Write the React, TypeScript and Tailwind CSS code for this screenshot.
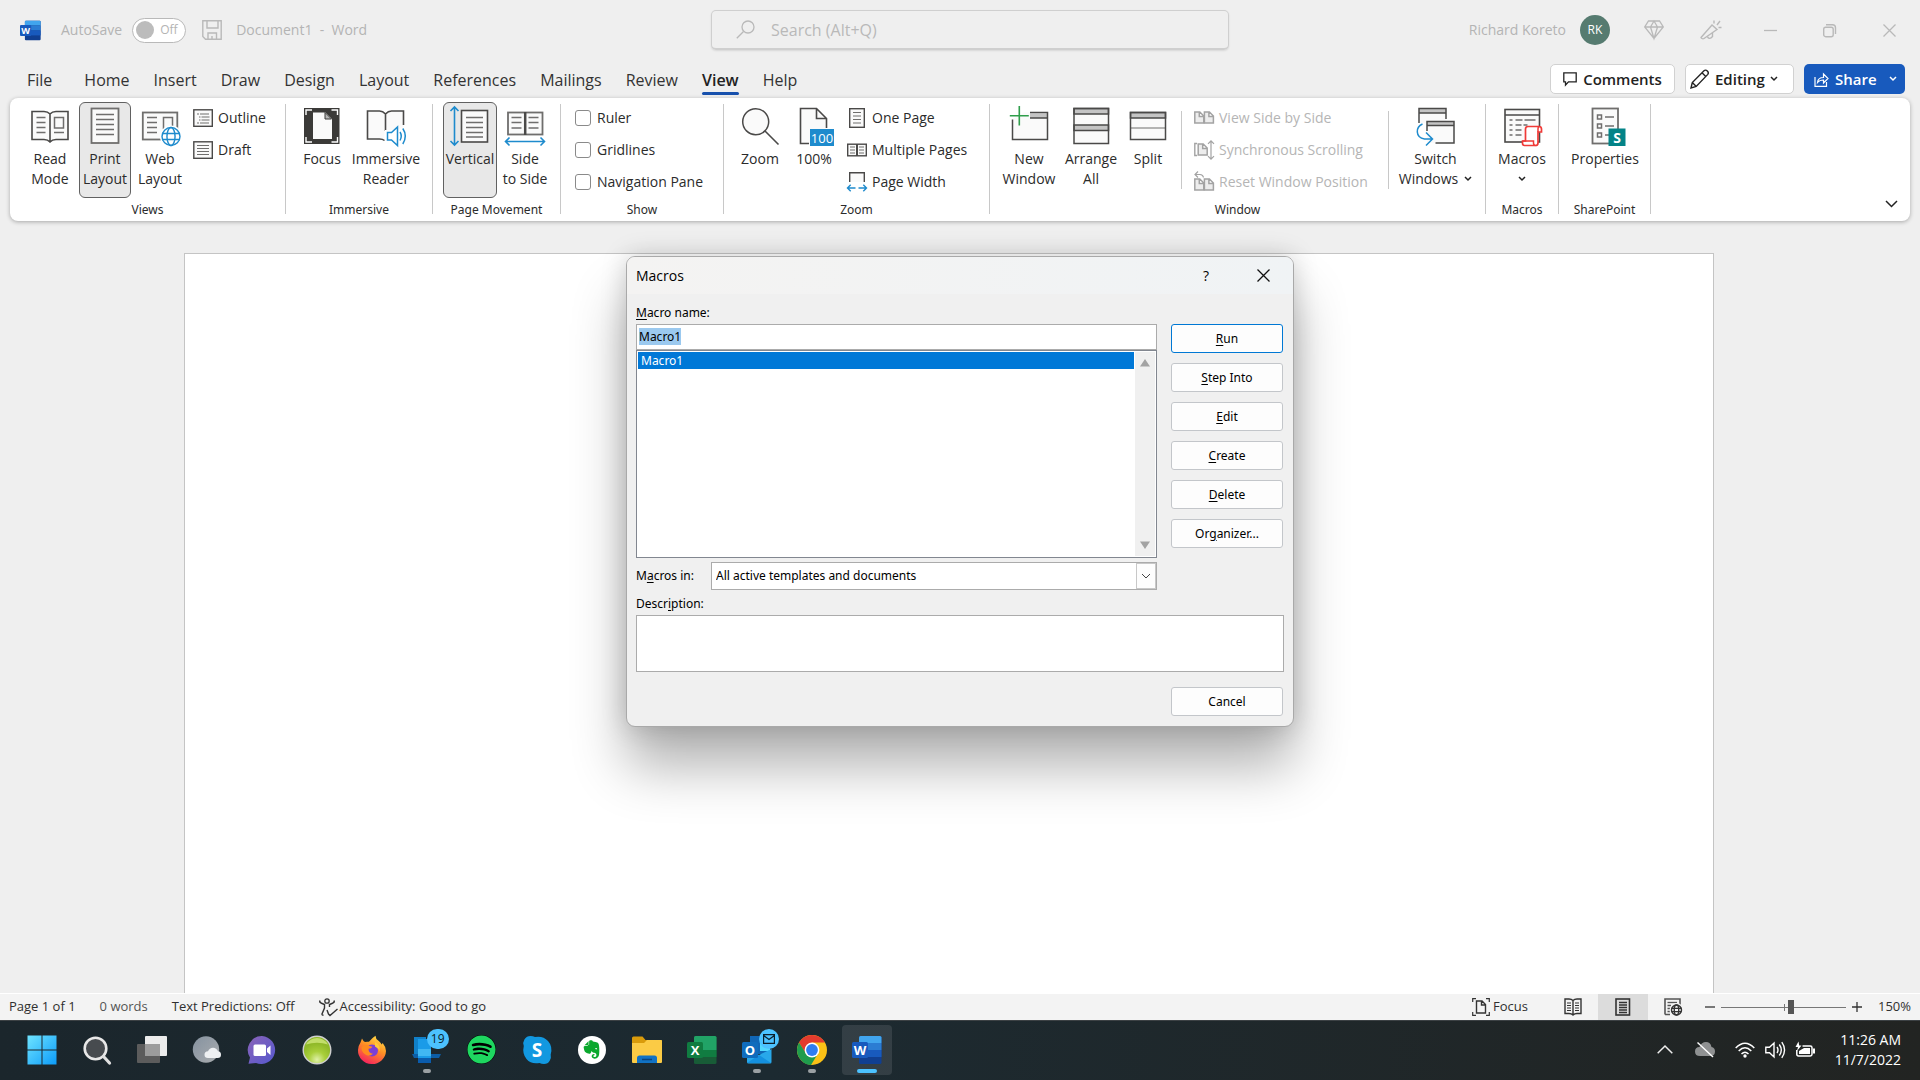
import { useEffect, useRef, type ReactNode } from "react";
import { FaEvernote, FaSpotify } from "react-icons/fa";

// ---------- icon helpers ----------

const INK = "#4a4948";
const LINE = "#6f6e6d";
const PAPER = "#fafafa";
const BLUE = "#1e8bcd";

function Svg({ w = 40, h = w, children }: { w?: number; h?: number; children: ReactNode }) {
  return (
    <svg width={w} height={h} viewBox={`0 0 ${w} ${h}`} fill="none" className="shrink-0 overflow-visible" aria-hidden="true">
      {children}
    </svg>
  );
}

function Lines({ x1, x2, ys, color = LINE, w = 1.5 }: { x1: number; x2: number; ys: number[]; color?: string; w?: number }) {
  return <path d={ys.map((y) => `M${x1} ${y}H${x2}`).join("")} stroke={color} strokeWidth={w} />;
}

function Chevron({ size = 8, color = "#222222", w = 1.5 }: { size?: number; color?: string; w?: number }) {
  return (
    <svg width={size} height={size / 2 + 2} viewBox={`0 0 ${size} ${size / 2 + 2}`} fill="none" className="inline-block shrink-0" aria-hidden="true">
      <path d={`M1 1l${size / 2 - 1} ${size / 2 - 1} ${size / 2 - 1}-${size / 2 - 1}`} stroke={color} strokeWidth={w} />
    </svg>
  );
}

// ---------- large ribbon icons (40 x 40) ----------

const ReadModeIcon = () => (
  <Svg>
    <path d="M20 8c-1.5-1.700-3.500-2.500-6-2.500H2v28h12c2.500 0 4.500.8 6 2.500 1.500-1.700 3.500-2.500 6-2.500h12v-28H26c-2.500 0-4.500.8-6 2.500zV36" fill={PAPER} stroke={INK} strokeWidth="1.6" />
    <Lines x1={6.5} x2={15.5} ys={[11.5, 16.5, 21.5, 26.5]} />
    <rect x="24.5" y="11.5" width="9" height="10.500" stroke={LINE} strokeWidth="1.5" />
    <Lines x1={24} x2={34} ys={[26.5]} />
  </Svg>
);

const PrintLayoutIcon = () => (
  <Svg>
    <rect x="6.5" y="2.5" width="27" height="34.5" fill={PAPER} stroke={LINE} strokeWidth="1.8" />
    <Lines x1={11} x2={29} ys={[8.5, 13.5, 18.5, 23.5, 28.5]} />
  </Svg>
);

function Globe({ cx, cy, r, color = BLUE, bg = "#ffffff" }: { cx: number; cy: number; r: number; color?: string; bg?: string }) {
  return (
    <g stroke={color} strokeWidth="1.4">
      <circle cx={cx} cy={cy} r={r + 2} fill={bg} stroke="none" />
      <circle cx={cx} cy={cy} r={r} fill={bg} />
      <ellipse cx={cx} cy={cy} rx={r * 0.45} ry={r} />
      <path d={`M${cx - r} ${cy - r / 3}h${2 * r}M${cx - r} ${cy + r / 3}h${2 * r}`} />
    </g>
  );
}

const WebLayoutIcon = () => (
  <Svg>
    <rect x="2.8" y="6.5" width="34.5" height="27" fill={PAPER} stroke={LINE} strokeWidth="1.8" />
    <Lines x1={7} x2={17} ys={[11.5, 16.5, 21.5, 26.5]} />
    <rect x="23.5" y="11.5" width="9" height="11" stroke={LINE} strokeWidth="1.5" />
    <Globe cx={31} cy={30.5} r={9} />
  </Svg>
);

const FocusIcon = () => (
  <Svg>
    <rect x="2" y="2" width="35.5" height="36" fill="#3b3a38" />
    <path d="M4 9V4h6M29.500 4h6v5M35.500 31v5h-6M10 36H4v-5" stroke="#fff" strokeWidth="1.4" />
    <path d="M11 6.500h12.500l6.500 6.500v20H11z" fill={PAPER} />
    <path d="M23 6.500V13h6.500z" fill="#b5b5b5" stroke="#3b3a38" />
  </Svg>
);

const ImmersiveIcon = () => (
  <Svg>
    <path d="M19.500 8c-1.500-1.700-3.500-3-6-3H1.500v28h12c2 0 4 .5 5 2V8zM19.500 8c1.500-1.700 3.500-3 6-3h12v28h-18z" fill={PAPER} />
    <path d="M19.500 25V8c-1.500-1.700-3.500-3-6-3H1.500v28h12c2 0 3.800.5 5 1.500M19.500 8c1.500-1.700 3.500-3 6-3h12v14" stroke={INK} strokeWidth="1.6" />
    <path d="M19 24h12l9-4v20H19z" fill="#fff" />
    <path d="M21.500 26.500h4l6-5.500v18.500l-6-5.500h-4zM34 26q2.500 4 0 8.500M36.800 22.500q5 7.500 0 15.500" stroke={BLUE} strokeWidth="1.5" />
  </Svg>
);

const VerticalIcon = () => (
  <Svg>
    <path d="M4.500 1v38M.5 5l4-4 4 4M.5 35l4 4 4-4" stroke={BLUE} strokeWidth="1.6" />
    <rect x="11.5" y="4.5" width="26" height="31.500" fill={PAPER} stroke={INK} strokeWidth="1.6" />
    <Lines x1={16} x2={33} ys={[11.5, 16.5, 21.5, 26.5, 31]} />
  </Svg>
);

const SideIcon = () => (
  <Svg>
    <rect x="3" y="6.5" width="34.5" height="22" fill={PAPER} stroke={LINE} strokeWidth="1.8" />
    <path d="M20.200 6v23" stroke={INK} strokeWidth="2.5" />
    <Lines x1={6.5} x2={16.5} ys={[11.5, 16.5, 22]} />
    <Lines x1={23.5} x2={33.5} ys={[11.5, 16.5, 22]} />
    <path d="M.5 35.500h39M4.500 31.500l-4 4 4 4M35.500 31.500l4 4-4 4" stroke={BLUE} strokeWidth="1.6" />
  </Svg>
);

const ZoomIcon = () => (
  <Svg>
    <circle cx="15.7" cy="15.7" r="13" fill={PAPER} stroke={INK} strokeWidth="1.5" />
    <path d="M25 25l13.500 13.500" stroke={INK} strokeWidth="1.6" />
  </Svg>
);

const HundredIcon = () => (
  <Svg>
    <path d="M6.500 37.500v-35h16l10 10v25z" fill={PAPER} />
    <path d="M15 37.500H6.500v-35h16l10 10V22M22.500 2.500v10h10" stroke={INK} strokeWidth="1.6" />
    <rect x="16" y="23" width="24" height="17" fill={BLUE} />
    <text x="28" y="36.5" textAnchor="middle" fill="#fff" fontSize="13" fontFamily="Open Sans, sans-serif">100</text>
  </Svg>
);

const NewWindowIcon = () => (
  <Svg>
    <path d="M3.500 13v20.500h35v-27H15" fill={PAPER} />
    <path d="M21 7.500h17.500V12H21z" fill="#c4c4c4" />
    <path d="M3.500 13.500v20h35v-27H21M21 12h17.500" stroke={INK} strokeWidth="1.5" />
    <path d="M10.300 0v19.500M.8 9.700h19" stroke="#2f9e4b" strokeWidth="1.6" />
  </Svg>
);

const ArrangeIcon = () => (
  <Svg>
    <rect x="3" y="2.5" width="34.5" height="35" fill={PAPER} />
    <path d="M3 2.500h34.500V8H3zM3 19h34.500v5.500H3z" fill="#c4c4c4" stroke={INK} strokeWidth="1.5" />
    <rect x="3" y="2.5" width="34.5" height="35" stroke={INK} strokeWidth="1.5" />
  </Svg>
);

const SplitIcon = () => (
  <Svg>
    <rect x="2.5" y="6.5" width="35" height="27" fill={PAPER} />
    <path d="M2.500 6.500h35V12h-35z" fill="#c4c4c4" stroke={INK} strokeWidth="1.5" />
    <path d="M2.500 22h35" stroke={LINE} strokeWidth="1.2" />
    <rect x="2.5" y="6.5" width="35" height="27" stroke={INK} strokeWidth="1.5" />
  </Svg>
);

const SwitchIcon = () => (
  <Svg>
    <path d="M3 17V2.500h27V17z" fill={PAPER} />
    <path d="M3 2.500h27V7H3z" fill="#c4c4c4" />
    <path d="M3 17V2.500h27V13M3 7h27" stroke={INK} strokeWidth="1.5" />
    <rect x="11" y="15.5" width="27" height="21.5" fill={PAPER} />
    <path d="M11 15.500h27v4H11z" fill="#c4c4c4" />
    <path d="M11 25v-9.500h27V37H19.500M11 19.500h27" stroke={INK} strokeWidth="1.5" />
    <path d="M6.500 18C-.5 21-1 31.500 8.500 33H16M10 26.500l6.500 6.500-6.500 6.500" stroke={BLUE} strokeWidth="1.5" />
  </Svg>
);

const MacrosIcon = () => (
  <Svg>
    <rect x="3" y="3.5" width="34.5" height="32.500" fill={PAPER} stroke={INK} strokeWidth="1.6" />
    <path d="M3 9h34.500" stroke={INK} strokeWidth="1.5" />
    <path d="M7.500 14h3m3 0h7m2 0h11M7.500 19h3m3 0h6m2 0h4M7.500 24h3m3 0h6M7.500 29h3m3 0h6" stroke={LINE} strokeWidth="1.5" />
    <path d="M23.500 35V23q0-2.500 2.500-2.500h11q2.500 0 2.500 2.500v3H36v11q0 2.500-2.500 2.500h-11q-2 0-2-2.200V35z" fill="#fff" stroke="#f03a37" strokeWidth="1.7" />
    <path d="M36 26v-3q0-2.500 1.500-2.500M20.500 35h11v2q0 2.500 2 2.500" stroke="#f03a37" strokeWidth="1.5" />
  </Svg>
);

const PropertiesIcon = () => (
  <Svg>
    <rect x="7.5" y="2.5" width="25.5" height="35" fill={PAPER} stroke={LINE} strokeWidth="1.8" />
    <path d="M12.500 9h4v4h-4zM12.500 18h4v4h-4zM12.500 27h4v4h-4zM20 11h9M20 20h9M20 29h4" stroke={LINE} strokeWidth="1.5" />
    <rect x="23.5" y="22.5" width="17" height="17.5" fill="#038387" />
    <text x="32" y="36.5" textAnchor="middle" fill="#fff" fontSize="14" fontWeight="700" fontFamily="Open Sans, sans-serif">S</text>
  </Svg>
);

// ---------- small ribbon icons (20 x 20) ----------

const OutlineIcon = () => (
  <Svg w={20}>
    <rect x="0.8" y="1.8" width="18.5" height="16.5" fill={PAPER} stroke={INK} strokeWidth="1.4" />
    <path d="M4 6h2m1 0h9M6 9h1.500m1 0h8M6 12h1.500m1 0h8M4 15h2m1 0h9" stroke={LINE} strokeWidth="1.2" />
  </Svg>
);

const DraftIcon = () => (
  <Svg w={20}>
    <rect x="0.8" y="1.8" width="18.5" height="16.5" fill={PAPER} stroke={INK} strokeWidth="1.4" />
    <Lines x1={4} x2={16} ys={[5.5, 8.5, 11.5, 14.5]} w={1.2} />
  </Svg>
);

const OnePageIcon = () => (
  <Svg w={20}>
    <rect x="2.7" y="0.7" width="14.6" height="18.6" fill={PAPER} stroke={INK} strokeWidth="1.4" />
    <Lines x1={6} x2={14} ys={[4.5, 8, 11.5, 15]} w={1.2} />
  </Svg>
);

const MultiPageIcon = () => (
  <Svg w={20}>
    <rect x="0.7" y="4.2" width="18.6" height="11.6" fill={PAPER} stroke={INK} strokeWidth="1.4" />
    <path d="M10 4v12" stroke={INK} strokeWidth="2" />
    <Lines x1={3} x2={8} ys={[7, 10, 13]} w={1.2} />
    <Lines x1={12} x2={17} ys={[7, 10, 13]} w={1.2} />
  </Svg>
);

const PageWidthIcon = () => (
  <Svg w={20}>
    <path d="M2.700 10V.8h14.600V10" fill={PAPER} stroke={INK} strokeWidth="1.4" />
    <path d="M.5 16h8M11.500 16h8M3.700 12.800L.5 16l3.200 3.200M16.300 12.800l3.200 3.200-3.200 3.200" stroke={BLUE} strokeWidth="1.4" />
  </Svg>
);

const PageGlyph = ({ x, y }: { x: number; y: number }) => (
  <path d={`M${x} ${y}h5l4 4v7h-9zM${x + 4.5} ${y}v4.500h4.500`} fill="#ededed" stroke="#a3a3a3" strokeWidth="1.5" />
);

const SideBySideIcon = () => (
  <Svg w={20}>
    <PageGlyph x={0.8} y={4} />
    <PageGlyph x={10.4} y={4} />
  </Svg>
);

const SyncScrollIcon = () => (
  <Svg w={20}>
    <path d="M3 3.500H.8v12H3" stroke="#a3a3a3" strokeWidth="1.4" />
    <PageGlyph x={4.2} y={4} />
    <path d="M17 .8v18.400M14 3.800l3-3 3 3M14 16.200l3 3 3-3" stroke="#a3a3a3" strokeWidth="1.2" />
  </Svg>
);

const ResetPosIcon = () => (
  <Svg w={20}>
    <path d="M4-.5l-3 3 3 3M1 2.500h5q3 0 3.500 3" stroke="#a3a3a3" strokeWidth="1.2" />
    <PageGlyph x={0.8} y={7} />
    <PageGlyph x={10.4} y={7} />
  </Svg>
);

// ---------- office logos, shared by title bar and taskbar ----------

function OfficeLogo({ size, letter, bands, plate }: { size: number; letter: string; bands: string[]; plate: string }) {
  return (
    <svg width={size} height={size} viewBox="0 0 30 30" aria-hidden="true">
      <rect x="7" y="1" width="22.5" height="28" rx="1.5" fill={bands[3]} />
      <path d="M7 8V2.500Q7 1 8.500 1H28q1.500 0 1.500 1.500V8z" fill={bands[0]} />
      <path d="M7 8h22.500v7H7z" fill={bands[1]} />
      <path d="M7 15h22.500v7H7z" fill={bands[2]} />
      <rect x="0" y="7" width="16" height="16" rx="1.5" fill={plate} />
      <text x="8" y="19.5" textAnchor="middle" fill="#fff" fontSize="13" fontWeight="700" fontFamily="Open Sans, sans-serif">{letter}</text>
    </svg>
  );
}

const WORD_BANDS = ["#41a5ee", "#2b7cd3", "#185abd", "#103f91"];
const EXCEL_BANDS = ["#21a366", "#21a366", "#107c41", "#185c37"];

// ---------- title bar ----------

function TitleBar() {
  return (
    <header className="grid h-[60px] grid-cols-[1fr_518px_1fr] items-center pl-5 text-sm text-[#b4b4b4]">
      <div className="flex items-center">
        <OfficeLogo size={21} letter="W" bands={WORD_BANDS} plate="#185abd" />
        <label htmlFor="autosave" className="ml-5">AutoSave</label>
        <button id="autosave" type="button" role="switch" aria-checked="false" className="ml-2.5 flex h-[25px] w-[54px] items-center gap-1.5 rounded-full border border-[#b9b9b9] bg-white px-[3px] text-xs">
          <span className="h-[18px] w-[18px] rounded-full bg-[#bcbcbc]" />
          Off
        </button>
        <button type="button" aria-label="Save" className="ml-4">
          <Svg w={20}>
            <path d="M.8.8h18.400v18.400H3.500L.8 16.500zM5 1v7h11V1M6 19v-6h8.500v6M10 19v-3" stroke="#b9b9b9" strokeWidth="1.4" />
          </Svg>
        </button>
        <span className="ml-3.5 whitespace-pre">Document1  -  Word</span>
      </div>
      <label className="flex h-10 items-center rounded-[5px] border border-b-2 border-[#cfcfcf] pl-6 shadow-[0_1px_2px_rgba(0,0,0,0.1)]">
        <Svg w={19}>
          <circle cx="12" cy="7" r="6" stroke="#b9b9b9" strokeWidth="1.3" />
          <path d="M7.500 11.500L.8 18.200" stroke="#b9b9b9" strokeWidth="1.3" />
        </Svg>
        <input type="search" aria-label="Search" placeholder="Search (Alt+Q)" className="ml-4 flex-1 bg-transparent text-base outline-none placeholder:text-[#b9b9b9]" />
      </label>
      <div className="flex items-center justify-end pr-6">
        <span>Richard Koreto</span>
        <span className="mr-[34px] ml-3.5 flex h-[30px] w-[30px] items-center justify-center rounded-full bg-[#567b70] text-xs text-white">RK</span>
        <button type="button" aria-label="Premium" className="mr-9">
          <Svg w={20}>
            <path d="M4.500 1h11L19.300 7 10 18.500.7 7zM.7 7h18.600M6.500 7L10 18.500 13.500 7 10 1 6.500 7" stroke="#b9b9b9" strokeWidth="1.3" />
          </Svg>
        </button>
        <button type="button" aria-label="What's new" className="mr-[42px]">
          <Svg w={22} h={20}>
            <path d="M1 17.500L12 5l5 4.500-13 9q-1 .7-2 0t-1-1zM7.500 17q2 3 5-.5V13M14 3.500v-3M17 5l3-4M18.500 7.500h3" stroke="#b9b9b9" strokeWidth="1.4" />
          </Svg>
        </button>
        <button type="button" aria-label="Minimize" className="mr-[46px]">
          <Svg w={13}><path d="M0 6.500h13" stroke="#b9b9b9" strokeWidth="1.3" /></Svg>
        </button>
        <button type="button" aria-label="Restore" className="mr-[47px]">
          <Svg w={13}>
            <rect x="0.7" y="3.2" width="9.5" height="9.5" rx="2" stroke="#b9b9b9" strokeWidth="1.4" />
            <path d="M3 .8h6.500q3 0 3 3V10" stroke="#b9b9b9" strokeWidth="1.4" />
          </Svg>
        </button>
        <button type="button" aria-label="Close">
          <Svg w={13}><path d="M.5.5l12 12M12.500.5l-12 12" stroke="#b9b9b9" strokeWidth="1.3" /></Svg>
        </button>
      </div>
    </header>
  );
}

// ---------- tabs ----------

const TABS = ["Home", "Insert", "Draw", "Design", "Layout", "References", "Mailings", "Review", "View", "Help"];

function TabRow() {
  return (
    <div className="flex h-[38px] items-center pr-[15px] pl-[27px] text-[#333333]">
      <nav className="flex h-full items-center gap-6 pt-0.5 text-base">
        <button type="button" className="mr-2">File</button>
        {TABS.map((tab) => (
          <button
            key={tab}
            type="button"
            className={tab === "View" ? "relative font-semibold text-[#222222] after:absolute after:inset-x-0 after:-bottom-[3px] after:h-[3px] after:rounded-full after:bg-[#1851ad]" : ""}
          >
            {tab}
          </button>
        ))}
      </nav>
      <div className="ml-auto flex items-center gap-2.5 text-[15px] font-semibold text-[#222222]">
        <button type="button" className="flex h-[30px] w-[125px] items-center justify-center gap-1.5 rounded-[5px] border border-[#d1d1d1] bg-white">
          <Svg w={14}><path d="M.8.8h12.400v9H5.500L2.500 13V9.800H.8z" stroke="#222" strokeWidth="1.3" /></Svg>
          Comments
        </button>
        <button type="button" className="flex h-[30px] w-[109px] items-center gap-[5px] rounded-[5px] border border-[#d1d1d1] bg-white pl-1">
          <Svg w={20}><path d="M1 19l1.300-5.500L14 1.800q1.500-1.500 3.300.3t.5 3.300L6.200 17.500zM2.300 13.500l4 4M12 3.800l4 4" stroke="#222" strokeWidth="1.4" /></Svg>
          <span>Editing</span>
          <Chevron />
        </button>
        <button type="button" className="flex h-[30px] w-[101px] items-center gap-1.5 rounded-[5px] bg-[#185abd] pl-2.5 text-white">
          <Svg w={15}>
            <path d="M1 5v9.300h11.500V10M3.500 10.500q.5-5 6-5V2L14 6.500 9.500 11V8q-4 0-6 2.500z" stroke="#fff" strokeWidth="1.2" />
          </Svg>
          <span className="mr-1.5">Share</span>
          <Chevron color="#ffffff" />
        </button>
      </div>
    </div>
  );
}

// ---------- ribbon ----------

function RibbonGroup({ label, width, pad, children }: { label: string; width: string; pad: string; children: ReactNode }) {
  return (
    <section aria-label={label} className={`flex shrink-0 ${width}`}>
      <div className="flex min-w-0 flex-1 flex-col pt-1">
        <div className={`flex h-24 items-start ${pad}`}>{children}</div>
        <div className="text-center font-['Noto_Sans',sans-serif] text-xs leading-6 whitespace-nowrap">{label}</div>
      </div>
      <div className="mt-1.5 h-[110px] w-px bg-[#c8c8c8]" />
    </section>
  );
}

function BigButton({ icon, lines, width, active = false, chevron = false }: { icon: ReactNode; lines: string[]; width: string; active?: boolean; chevron?: boolean }) {
  return (
    <button
      type="button"
      aria-pressed={active}
      className={`flex h-24 shrink-0 flex-col items-center rounded-md border pt-[3px] leading-5 whitespace-nowrap ${width} ${active ? "border-[#616161] bg-[#e8e8e8]" : "border-transparent"}`}
    >
      {icon}
      <span className="mt-[3px]">{lines[0]}</span>
      <span className="flex h-5 items-center gap-1.5">
        {lines[1]}
        {chevron && <Chevron />}
      </span>
    </button>
  );
}

function SmallButton({ icon, label, disabled = false }: { icon: ReactNode; label: string; disabled?: boolean }) {
  return (
    <button type="button" disabled={disabled} className="flex h-8 items-center gap-[5px] whitespace-nowrap disabled:text-[#b5b5b5]">
      {icon}
      {label}
    </button>
  );
}

function Ribbon() {
  return (
    <div className="relative z-10 mx-2.5 flex h-[123px] rounded-lg bg-white text-sm text-[#2b2b2b] shadow-[0_1px_4px_rgba(0,0,0,0.3)]">
      <RibbonGroup label="Views" width="w-[276px]" pad="pl-3.5 gap-[3px]">
        <BigButton icon={<ReadModeIcon />} lines={["Read", "Mode"]} width="w-[52px]" />
        <BigButton icon={<PrintLayoutIcon />} lines={["Print", "Layout"]} width="w-[52px]" active />
        <BigButton icon={<WebLayoutIcon />} lines={["Web", "Layout"]} width="w-[52px]" />
        <div className="ml-1">
          <SmallButton icon={<OutlineIcon />} label="Outline" />
          <SmallButton icon={<DraftIcon />} label="Draft" />
        </div>
      </RibbonGroup>
      <RibbonGroup label="Immersive" width="w-[147px]" pad="pl-2.5">
        <BigButton icon={<FocusIcon />} lines={["Focus"]} width="w-[52px]" />
        <BigButton icon={<ImmersiveIcon />} lines={["Immersive", "Reader"]} width="w-[76px]" />
      </RibbonGroup>
      <RibbonGroup label="Page Movement" width="w-[128px]" pad="pl-2.5">
        <BigButton icon={<VerticalIcon />} lines={["Vertical"]} width="w-[54px]" active />
        <BigButton icon={<SideIcon />} lines={["Side", "to Side"]} width="w-[56px]" />
      </RibbonGroup>
      <RibbonGroup label="Show" width="w-[163px]" pad="pl-3.5">
        <div>
          {["Ruler", "Gridlines", "Navigation Pane"].map((name) => (
            <label key={name} className="flex h-8 items-center gap-1.5 whitespace-nowrap">
              <input type="checkbox" className="h-4 w-4 appearance-none rounded-[3px] border border-[#8a8a8a] bg-white" />
              {name}
            </label>
          ))}
        </div>
      </RibbonGroup>
      <RibbonGroup label="Zoom" width="w-[266px]" pad="pl-2">
        <BigButton icon={<ZoomIcon />} lines={["Zoom"]} width="w-[56px]" />
        <BigButton icon={<HundredIcon />} lines={["100%"]} width="w-[52px]" />
        <div className="ml-[7px]">
          <SmallButton icon={<OnePageIcon />} label="One Page" />
          <SmallButton icon={<MultiPageIcon />} label="Multiple Pages" />
          <SmallButton icon={<PageWidthIcon />} label="Page Width" />
        </div>
      </RibbonGroup>
      <RibbonGroup label="Window" width="w-[496px]" pad="pl-2">
        <BigButton icon={<NewWindowIcon />} lines={["New", "Window"]} width="w-[62px]" />
        <BigButton icon={<ArrangeIcon />} lines={["Arrange", "All"]} width="w-[62px]" />
        <BigButton icon={<SplitIcon />} lines={["Split"]} width="w-[52px]" />
        <div className="mt-[9px] mr-3 ml-[7px] h-[78px] w-px bg-[#c8c8c8]" />
        <div className="w-[194px]">
          <SmallButton icon={<SideBySideIcon />} label="View Side by Side" disabled />
          <SmallButton icon={<SyncScrollIcon />} label="Synchronous Scrolling" disabled />
          <SmallButton icon={<ResetPosIcon />} label="Reset Window Position" disabled />
        </div>
        <div className="mt-[9px] h-[78px] w-px bg-[#c8c8c8]" />
        <BigButton icon={<SwitchIcon />} lines={["Switch", "Windows"]} width="w-[93px]" chevron />
      </RibbonGroup>
      <RibbonGroup label="Macros" width="w-[73px]" pad="pl-1.5">
        <BigButton icon={<MacrosIcon />} lines={["Macros"]} width="w-[60px]" chevron />
      </RibbonGroup>
      <RibbonGroup label="SharePoint" width="w-[92px]" pad="pl-1.5">
        <BigButton icon={<PropertiesIcon />} lines={["Properties"]} width="w-[80px]" />
      </RibbonGroup>
      <button type="button" aria-label="Collapse ribbon" className="mt-auto mr-3 mb-2 ml-auto">
        <Chevron size={13} />
      </button>
    </div>
  );
}

// ---------- macros dialog ----------

// Label text with its access key underlined
function KeyText({ text, at }: { text: string; at: number }) {
  return (
    <>
      {text.slice(0, at)}
      <u className="underline-offset-2">{text[at]}</u>
      {text.slice(at + 1)}
    </>
  );
}

const ACTIONS = [
  { text: "Run", at: 0 },
  { text: "Step Into", at: 0 },
  { text: "Edit", at: 0 },
  { text: "Create", at: 0 },
  { text: "Delete", at: 0 },
  { text: "Organizer...", at: 2 },
];

function MacrosDialog() {
  const nameRef = useRef<HTMLInputElement>(null);

  useEffect(() => {
    nameRef.current?.focus();
    nameRef.current?.select();
  }, []);

  return (
    <div
      role="dialog"
      aria-label="Macros"
      className="absolute top-[35px] left-1/2 z-20 w-[668px] -translate-x-1/2 overflow-hidden rounded-[9px] border border-[#a9a9a9] bg-[#f0f0f0] font-['Noto_Sans',sans-serif] text-xs text-black shadow-[0_40px_54px_rgba(0,0,0,0.3),0_0_26px_rgba(0,0,0,0.18)]"
    >
      <div className="flex h-[37px] items-center bg-linear-to-r from-[#f4f3f2] to-[#f0f3f5] pr-[23px] pl-[9px] font-['Open_Sans',sans-serif] text-sm">
        <span>Macros</span>
        <button type="button" aria-label="Help" className="mr-12 ml-auto">?</button>
        <button type="button" aria-label="Close">
          <Svg w={13}><path d="M.5.5l12 12M12.500.5l-12 12" stroke="#111" strokeWidth="1.3" /></Svg>
        </button>
      </div>
      <div className="px-[9px] pt-[9px] pb-2.5">
        <div className="flex gap-3.5 pr-px">
          <div className="flex-1">
            <label htmlFor="macro-name" className="block h-[21px] leading-5">
              <KeyText text="Macro name:" at={0} />
            </label>
            <input
              id="macro-name"
              ref={nameRef}
              defaultValue="Macro1"
              className="block h-[26px] w-full border border-[#ababab] bg-white px-0.5 pb-0.5 leading-[17px] outline-none selection:bg-[#9bc9ef] selection:text-black"
            />
            <div className="flex h-[208px] border border-[#828790] bg-white p-px">
              <ul role="listbox" aria-label="Macros" className="flex-1">
                <li role="option" aria-selected="true" className="bg-[#0078d7] pl-[3px] leading-[17px] text-white">Macro1</li>
              </ul>
              <div className="ml-px flex w-5 flex-col items-center justify-between bg-[#f0f0f0] py-[7px]">
                <Svg w={10} h={8}><path d="M0 7.500L5 0l5 7.500z" fill="#a3a3a3" /></Svg>
                <Svg w={10} h={8}><path d="M0 .5L5 8l5-7.500z" fill="#a3a3a3" /></Svg>
              </div>
            </div>
            <div className="mt-1 flex items-center">
              <label htmlFor="macros-in" className="w-[75px]">
                <KeyText text="Macros in:" at={1} />
              </label>
              <div className="relative flex-1">
                <select id="macros-in" className="block h-7 w-full appearance-none border border-[#ababab] bg-white pl-1 outline-none">
                  <option>All active templates and documents</option>
                </select>
                <span className="pointer-events-none absolute top-px right-px flex h-[26px] w-5 items-center justify-center border border-[#c8c8c8] bg-[#fdfdfd]">
                  <Chevron size={10} color="#444444" w={1} />
                </span>
              </div>
            </div>
          </div>
          <div className="flex w-[112px] flex-col gap-2.5 pt-[21px]">
            {ACTIONS.map((action, i) => (
              <button
                key={action.text}
                type="button"
                className={`h-[29px] rounded-[3px] border bg-[#fdfdfd] pt-px ${i === 0 ? "border-[#0078d4]" : "border-[#c3c6ca]"}`}
              >
                <KeyText text={action.text} at={action.at} />
              </button>
            ))}
          </div>
        </div>
        <label htmlFor="description" className="mt-0.5 block h-[23px] leading-6">
          <KeyText text="Description:" at={5} />
        </label>
        <textarea id="description" className="block h-[57px] w-full resize-none border border-[#ababab] bg-white outline-none" />
        <div className="mt-[15px] flex justify-end pr-px">
          <button type="button" className="h-[29px] w-[112px] rounded-[3px] border border-[#c3c6ca] bg-[#fdfdfd] pt-px">Cancel</button>
        </div>
      </div>
    </div>
  );
}

// ---------- status bar ----------

function StatusBar() {
  return (
    <footer className="flex h-[27px] items-center border-t border-white bg-[#f3f3f3] px-[9px] text-[13px] text-[#2f2f2f]">
      <span>Page 1 of 1</span>
      <span className="ml-6 text-[#555555]">0 words</span>
      <span className="ml-6">Text Predictions: Off</span>
      <button type="button" className="ml-6 flex items-center gap-0.5">
        <Svg w={19} h={18}>
          <circle cx="8" cy="3" r="2.2" stroke="#333" strokeWidth="1.3" />
          <path d="M1 2.500q-.8 1.500 1 2.500l3.500 1.500V10L3 16q0 1.500 1.500 1M15 2.500q.8 1.500-1 2.500l-3.500 1.500V9M8 12l1.500 4 1.500 1.500 7.500-6.500" stroke="#333" strokeWidth="1.4" />
        </Svg>
        Accessibility: Good to go
      </button>
      <div className="ml-auto flex h-full items-center">
        <button type="button" className="mr-5 flex items-center gap-[3px]">
          <Svg w={18}>
            <path d="M4 .7H.7V4M14 .7h3.300V4M17.300 14v3.300H14M4 17.300H.7V14" stroke="#333" strokeWidth="1.2" />
            <path d="M4.500 3H10l3.500 3.500V15h-9zM9.500 3v4h4" stroke="#333" strokeWidth="1.4" />
          </Svg>
          Focus
        </button>
        <button type="button" aria-label="Read mode" className="flex h-full w-[50px] items-center justify-center">
          <Svg w={18}>
            <path d="M9 2.500Q7.500 1 5 1H1v14.500h4q2.500 0 4 1.500 1.500-1.500 4-1.500h4V1h-4q-2.500 0-4 1.500zV17" stroke="#333" strokeWidth="1.4" />
            <Lines x1={3} x2={7} ys={[5, 7.5, 10, 12.5]} color="#333" w={1.2} />
            <Lines x1={11} x2={15} ys={[5, 7.5, 10, 12.5]} color="#333" w={1.2} />
          </Svg>
        </button>
        <button type="button" aria-label="Print layout" aria-pressed="true" className="flex h-full w-[50px] items-center justify-center bg-[#dcdcdc]">
          <Svg w={16} h={18}>
            <rect x="1" y="1" width="13.5" height="16" stroke="#333" strokeWidth="1.6" />
            <Lines x1={4} x2={12} ys={[4.5, 7, 9.5, 12, 14.5]} color="#333" w={1.3} />
          </Svg>
        </button>
        <button type="button" aria-label="Web layout" className="flex h-full w-[50px] items-center justify-center">
          <Svg w={18}>
            <path d="M1 16.500V1h15v6M1 16.500h5" stroke="#555" strokeWidth="1.6" />
            <Lines x1={3.5} x2={13} ys={[4.5]} color="#555" w={1.3} />
            <Lines x1={3.5} x2={7} ys={[7.5, 10.5, 13.5]} color="#555" w={1.3} />
            <Globe cx={12.5} cy={12} r={5} color="#333" bg="#f3f3f3" />
          </Svg>
        </button>
        <button type="button" aria-label="Zoom out" className="ml-[7px]">
          <Svg w={10}><path d="M0 5h10" stroke="#333" strokeWidth="1.3" /></Svg>
        </button>
        <div className="relative mx-1.5 flex h-full w-[125px] items-center">
          <input
            type="range"
            aria-label="Zoom level"
            min={0}
            max={100}
            defaultValue={56}
            className="h-px w-full appearance-none bg-[#777777] [&::-webkit-slider-thumb]:h-3.5 [&::-webkit-slider-thumb]:w-1.5 [&::-webkit-slider-thumb]:appearance-none [&::-webkit-slider-thumb]:bg-[#555555]"
          />
          <span className="absolute left-1/2 h-[7px] w-px bg-[#777777]" />
        </div>
        <button type="button" aria-label="Zoom in">
          <Svg w={10}><path d="M0 5h10M5 0v10" stroke="#333" strokeWidth="1.3" /></Svg>
        </button>
        <span className="ml-3 w-[37px] text-right">150%</span>
      </div>
    </footer>
  );
}

// ---------- taskbar ----------

const StartLogo = () => (
  <Svg w={30}>
    <defs>
      <linearGradient id="start" x1="0" y1="0" x2="1" y2="1">
        <stop stopColor="#6fe4ff" />
        <stop offset="1" stopColor="#0c9bf8" />
      </linearGradient>
    </defs>
    <path d="M.5.5h14v14H.5zM15.500.5h14v14h-14zM.5 15.500h14v14H.5zM15.500 15.500h14v14h-14z" fill="url(#start)" />
  </Svg>
);

const SearchLogo = () => (
  <Svg w={28}>
    <circle cx="12.5" cy="12.5" r="10.8" fill="#474b4f" stroke="#e8e8e8" strokeWidth="2.6" />
    <path d="M20.500 20.500l6 6.500" stroke="#e0e0e0" strokeWidth="3.2" strokeLinecap="round" />
  </Svg>
);

const TaskViewLogo = () => (
  <Svg w={30}>
    <rect x="8" y="1" width="22" height="20" rx="1" fill="#ececec" />
    <rect x="0" y="9" width="23" height="19" rx="1" fill="#5c5c5c" />
    <path d="M8 9h15v12H8z" fill="#9c9c9c" />
  </Svg>
);

const WeatherLogo = () => (
  <Svg w={29}>
    <defs>
      <linearGradient id="moon" x1="0" y1="0" x2="1" y2="1">
        <stop stopColor="#8592a0" />
        <stop offset="1" stopColor="#a9acae" />
      </linearGradient>
    </defs>
    <circle cx="14" cy="14.5" r="13.2" fill="url(#moon)" />
    <path d="M16 23q-3.500 0-3.500-3.300t3.500-3.500q1.500-3.500 5-3.500t5 3.500q3 .3 3 3.500T25.500 23z" fill="#eef0f2" />
  </Svg>
);

const ChatLogo = () => (
  <Svg w={30}>
    <defs>
      <linearGradient id="chat" x1="0" y1="0" x2="1" y2="1">
        <stop stopColor="#8a63b8" />
        <stop offset="1" stopColor="#5558cf" />
      </linearGradient>
    </defs>
    <path d="M15 1a14 14 0 1 1-6 27l-7.500.8L3 22.500A14 14 0 0 1 15 1z" fill="url(#chat)" />
    <rect x="6.5" y="9.5" width="12.5" height="11.5" rx="1.5" fill="#fff" />
    <path d="M20 13.500l3.500-3V20L20 17z" fill="#fff" />
  </Svg>
);

const GreenOrb = () => (
  <Svg w={30}>
    <defs>
      <radialGradient id="orb" cx=".5" cy=".85" r=".6">
        <stop stopColor="#dff0a8" />
        <stop offset=".5" stopColor="#a9cf3a" />
        <stop offset="1" stopColor="#8fb828" />
      </radialGradient>
    </defs>
    <circle cx="15" cy="15" r="13.8" fill="url(#orb)" stroke="#cfcfcf" strokeWidth="1.4" />
    <path d="M4 9.500Q15 6 26 9.500 22 3 15 3T4 9.500z" fill="#c2de6a" />
  </Svg>
);

const FirefoxLogo = () => (
  <Svg w={30}>
    <defs>
      <linearGradient id="fox" x1=".8" y1="0" x2=".3" y2="1">
        <stop stopColor="#ffe14a" />
        <stop offset=".45" stopColor="#ff9124" />
        <stop offset="1" stopColor="#f5205f" />
      </linearGradient>
    </defs>
    <path d="M5 3.500q1 2.500 3 3.500 2-.6 4-.2Q15 3 18.500.8q0 3 3 5 2 1.500 3.200 3.700l1-1.500Q29 12 29 16a14 13.500 0 1 1-28-1q0-4 2.500-7.500z" fill="url(#fox)" />
    <circle cx="15" cy="15.5" r="6" fill="#7a3fd6" />
    <path d="M4.500 12q4-3.500 8-1l3 .8q-1 2-4 2 0 4.500 4.500 5-4 3.500-8 .5T4.500 12z" fill="#ff8a1f" />
    <path d="M18 7q6 3 4.500 9.500-1-3.500-4.500-5z" fill="#ffca3a" />
  </Svg>
);

const PhoneLogo = () => (
  <Svg w={30}>
    <path d="M2 2h12v18H2z" fill="#1080c8" />
    <path d="M0 19h29l-2 4H2z" fill="#0d5ea6" />
    <path d="M6 4h13v24H6z" fill="#1a9be8" />
    <path d="M6 14h13v7H6z" fill="#41b7f2" />
    <path d="M6 23h13v5H6z" fill="#0a5cad" />
  </Svg>
);

const SkypeLogo = () => (
  <Svg w={30}>
    <path d="M8.500 1q2.500 0 4.500 1Q21 .5 26 6t2.700 13.500q.8 3-1 6.200T22 29q-2.500 0-4.500-1Q9 29.500 4.500 24T1.800 11Q.5 7.500 2.500 4.300T8.500 1z" fill="#1298e0" />
    <text x="15" y="21.5" textAnchor="middle" fill="#fff" fontSize="19" fontWeight="700" fontFamily="Open Sans, sans-serif">S</text>
  </Svg>
);

const FolderLogo = () => (
  <Svg w={30}>
    <path d="M0 3q0-1.500 1.500-1.500h9L13.500 5H29q1 0 1 1v6H0z" fill="#d99b0b" />
    <path d="M0 8h12l3-3h14q1 0 1 1v21q0 1-1 1H1q-1 0-1-1z" fill="#fbcb45" />
    <path d="M5 28v-5q0-2.500 2.500-2.500h15Q25 20.500 25 23v5z" fill="#1172c4" />
    <path d="M10 24.500h10" stroke="#0a437c" strokeWidth="1.5" />
  </Svg>
);

const ChromeLogo = () => (
  <Svg w={30}>
    <circle cx="15" cy="15" r="15" fill="#fbc116" />
    <path d="M2 7.500a15 15 0 0 1 26 0H15L9 19z" fill="#e33b2e" />
    <path d="M2 7.500A15 15 0 0 0 14 30l7-11.500H9z" fill="#1f9c4d" />
    <circle cx="15" cy="15" r="7.4" fill="#fff" />
    <circle cx="15" cy="15" r="5.9" fill="#2f7df0" />
  </Svg>
);

const OutlookLogo = () => (
  <Svg w={30}>
    <path d="M8 1h20v18H8z" fill="#1066b5" />
    <path d="M18 8h10v8H18z" fill="#50d9ff" />
    <path d="M5 14l12 6 12.500-6v13q0 1.500-1.500 1.500H6.500Q5 28.500 5 27z" fill="#28a8ea" />
    <path d="M5 28l12-8 12 8z" fill="#1490df" />
    <rect x="0" y="7" width="16" height="16" rx="1.5" fill="#0f6cbd" />
    <text x="8" y="19.5" textAnchor="middle" fill="#fff" fontSize="13" fontWeight="700" fontFamily="Open Sans, sans-serif">O</text>
  </Svg>
);

const APPS: { name: string; icon: ReactNode; state?: "open" | "active"; badge?: ReactNode }[] = [
  { name: "Start", icon: <StartLogo /> },
  { name: "Search", icon: <SearchLogo /> },
  { name: "Task view", icon: <TaskViewLogo /> },
  { name: "Weather", icon: <WeatherLogo /> },
  { name: "Chat", icon: <ChatLogo /> },
  { name: "Webroot", icon: <GreenOrb /> },
  { name: "Firefox", icon: <FirefoxLogo /> },
  { name: "Your Phone", icon: <PhoneLogo />, state: "open", badge: "19" },
  { name: "Spotify", icon: <span className="rounded-full bg-black"><FaSpotify size={29} color="#1ed760" /></span> },
  { name: "Skype", icon: <SkypeLogo /> },
  {
    name: "Evernote",
    icon: (
      <span className="flex h-7 w-7 items-center justify-center rounded-full bg-white">
        <FaEvernote size={21} color="#0aa82d" />
      </span>
    ),
  },
  { name: "File Explorer", icon: <FolderLogo /> },
  { name: "Excel", icon: <OfficeLogo size={30} letter="X" bands={EXCEL_BANDS} plate="#107c41" /> },
  {
    name: "Outlook",
    icon: <OutlookLogo />,
    state: "open",
    badge: (
      <Svg w={12} h={10}>
        <path d="M.6.6h10.800v8.800H.6zM.6 1.500L6 5.500l5.400-4" stroke="#0b1f2c" strokeWidth="1.2" />
      </Svg>
    ),
  },
  { name: "Chrome", icon: <ChromeLogo />, state: "open" },
  { name: "Word", icon: <OfficeLogo size={30} letter="W" bands={WORD_BANDS} plate="#185abd" />, state: "active" },
];

function Taskbar() {
  return (
    <div className="flex h-[60px] items-center border-t border-[#3c4144] bg-linear-to-r from-[#1b262c] via-[#1c2a31] via-40% to-[#222422] pr-[19px] pb-0.5 pl-3.5 text-white">
      {APPS.map((app) => (
        <button key={app.name} type="button" aria-label={app.name} className="flex h-[50px] w-[55px] justify-center">
          <span className={`relative flex h-[50px] w-[50px] items-center justify-center rounded ${app.state === "active" ? "bg-white/10" : ""}`}>
            {app.icon}
            {app.badge && (
              <span className="absolute top-1 right-[3px] flex h-5 min-w-5 items-center justify-center rounded-full bg-[#4cc2ff] px-1 text-xs text-[#0b1f2c]">
                {app.badge}
              </span>
            )}
            {app.state === "open" && <span className="absolute bottom-0.5 h-1 w-2 rounded-full bg-[#9aa0a3]" />}
            {app.state === "active" && <span className="absolute bottom-0.5 h-1 w-5 rounded-full bg-[#4cc2ff]" />}
          </span>
        </button>
      ))}
      <div className="ml-auto flex items-center">
        <button type="button" aria-label="Show hidden icons" className="mr-[22px]">
          <Svg w={16} h={9}><path d="M.7 8.300L8 1l7.300 7.300" stroke="#eee" strokeWidth="1.5" /></Svg>
        </button>
        <span className="mr-5">
          <Svg w={20} h={17}>
            <path d="M5 15q-5 0-5-4.500T4.500 6Q6.500 1 11 1t5.500 5q3.500.5 3.500 4.500T16 15z" fill="#8f9192" />
            <path d="M2.500 1.500L18 16" stroke="#fff" strokeWidth="1.4" />
          </Svg>
        </span>
        <button type="button" aria-label="Network, volume and battery" className="mr-5 flex items-center gap-2.5">
          <Svg w={20} h={16}>
            <path d="M.7 6q9.300-9.500 18.600 0M3.700 9q6.300-6.500 12.600 0M6.500 12q3.500-3.500 7 0" stroke="#fff" strokeWidth="1.5" />
            <circle cx="10" cy="14" r="1.7" fill="#fff" />
          </Svg>
          <Svg w={20} h={18}>
            <path d="M.8 6.200h3.700L9 2v14l-4.500-4.200H.8zM12 6q2 3 0 6M14.300 3.500q4 5.500 0 11M16.800 1.200q5.500 7.800 0 15.600" stroke="#fff" strokeWidth="1.4" />
          </Svg>
          <Svg w={20} h={16}>
            <path d="M7.500 4h7.800Q17 4 17 5.700v6.600q0 1.700-1.700 1.700H3.500q-1.700 0-1.700-1.700V8" stroke="#fff" strokeWidth="1.5" />
            <path d="M4 9l5-3h6v6H4z" fill="#fff" />
            <path d="M18 6.500h2v5h-2zM3.500-.5L.5 5H3L2 9l4.500-5.500H4.200z" fill="#fff" />
          </Svg>
        </button>
        <div className="text-right text-sm leading-5">
          <div>11:26 AM</div>
          <div>11/7/2022</div>
        </div>
      </div>
    </div>
  );
}

export default function App() {
  return (
    <div className="flex h-screen flex-col overflow-hidden bg-[#efefef] font-['Open_Sans',sans-serif]">
      <TitleBar />
      <TabRow />
      <Ribbon />
      <main className="relative flex min-h-0 flex-1 pt-8 pr-[206px] pl-[184px]">
        <div className="flex-1 border border-b-0 border-[#c4c4c4] bg-white" />
        <MacrosDialog />
      </main>
      <StatusBar />
      <Taskbar />
    </div>
  );
}
